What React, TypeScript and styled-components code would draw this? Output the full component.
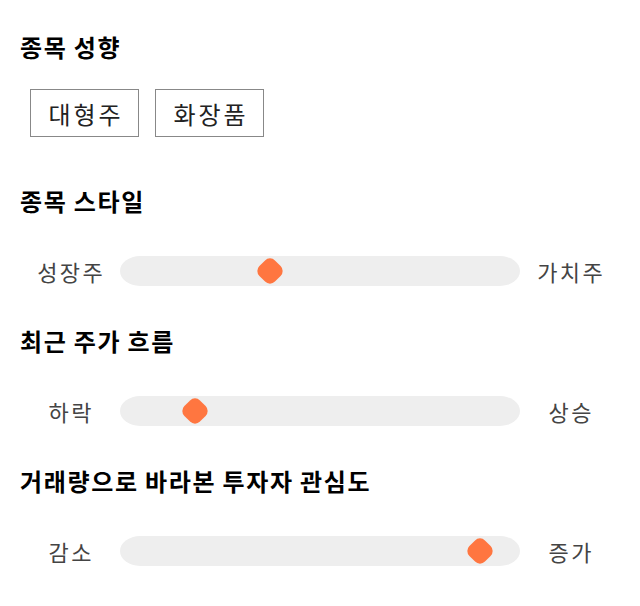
import React from "react";
import styled, { createGlobalStyle } from "styled-components";

const Global = createGlobalStyle`
  html, body { margin: 0; padding: 0; background: #fff; }
  body { font-family: "Noto Sans CJK KR", "Noto Sans", sans-serif; color: #111; }
`;

const Page = styled.div`
  padding: 30px 20px 20px 20px;
  width: 600px;
`;

const Section = styled.section<{ $gap: number; $after: number }>`
  display: flex;
  flex-direction: column;
  gap: ${(p) => p.$gap}px;
  margin-bottom: ${(p) => p.$after}px;
`;

const Heading = styled.h2`
  margin: 0;
  font-size: 24px;
  line-height: 33px;
  font-weight: 700;
  color: #000;
  letter-spacing: 1.7px;
  word-spacing: -1px;
`;

const ChipRow = styled.div`
  display: flex;
  gap: 16px;
  padding-left: 10px;
`;

const Chip = styled.div`
  box-sizing: border-box;
  height: 48px;
  width: 109px;
  display: flex;
  align-items: center;
  justify-content: center;
  border: 1px solid #888;
  font-size: 24px;
  letter-spacing: 3px;
  padding-left: 3px;
  color: #222;
`;

const SliderRow = styled.div`
  display: grid;
  grid-template-columns: 100px 400px 100px;
  align-items: center;
  height: 30px;
`;

const Label = styled.span`
  text-align: center;
  font-size: 22px;
  letter-spacing: 2.5px;
  padding-left: 2.5px;
  color: #444;
  line-height: 30px;
`;

const Track = styled.div`
  position: relative;
  height: 30px;
  background: #eeeeee;
  border-radius: 20px / 15px;
`;

const Thumb = styled.div`
  position: absolute;
  top: 50%;
  width: 22px;
  height: 22px;
  margin-left: -11px;
  margin-top: -11px;
  background: #ff7640;
  border-radius: 7px;
  transform: rotate(45deg);
`;

const sliders = [
  { title: "종목 스타일", left: "성장주", right: "가치주", pos: 150 },
  { title: "최근 주가 흐름", left: "하락", right: "상승", pos: 75 },
  { title: "거래량으로 바라본 투자자 관심도", left: "감소", right: "증가", pos: 360 },
];

export default function App() {
  return (
    <Page>
      <Global />
      <Section $gap={26} $after={47}>
        <Heading>종목 성향</Heading>
        <ChipRow>
          <Chip>대형주</Chip>
          <Chip>화장품</Chip>
        </ChipRow>
      </Section>
      {sliders.map((s) => (
        <Section key={s.title} $gap={39} $after={38}>
          <Heading>{s.title}</Heading>
          <SliderRow>
            <Label>{s.left}</Label>
            <Track>
              <Thumb style={{ left: `${s.pos}px` }} />
            </Track>
            <Label>{s.right}</Label>
          </SliderRow>
        </Section>
      ))}
    </Page>
  );
}
